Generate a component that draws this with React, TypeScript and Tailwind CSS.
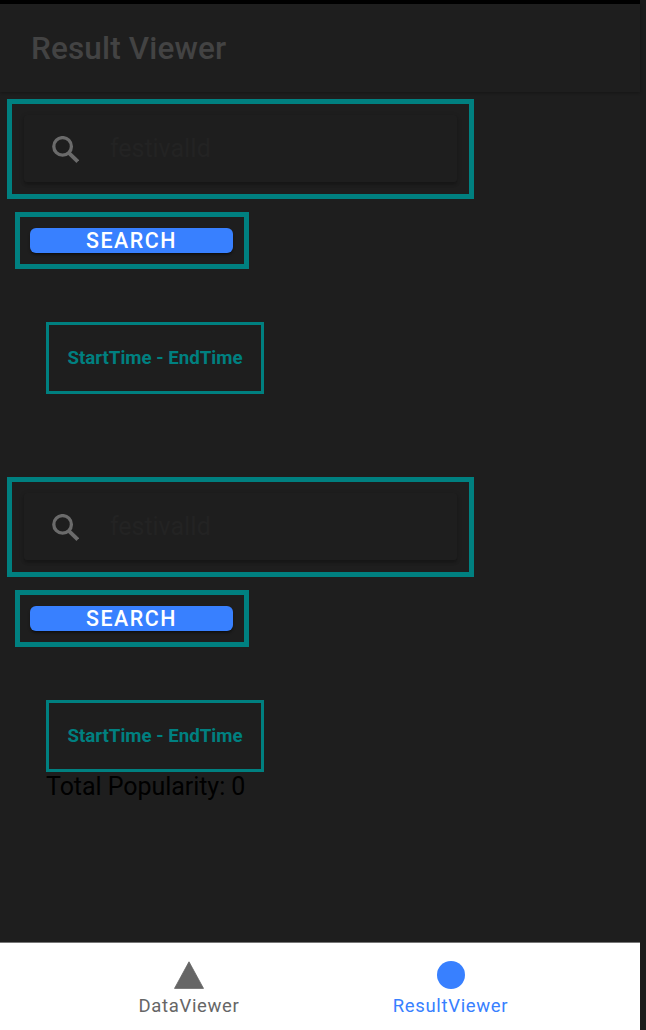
function SearchIcon() {
  return (
    <svg viewBox="0 0 27 27" className="mt-[2px] ml-[28px] h-[27px] w-[27px] shrink-0" fill="none" stroke="#6b6b6b">
      <circle cx="10.6" cy="10.4" r="8.8" strokeWidth="3.3" />
      <path d="M16.8 16.8 25.8 25.6" strokeWidth="3.8" />
    </svg>
  );
}

function SearchPanel() {
  return (
    <>
      <div className="ml-[7px] h-[100px] w-[467px] border-[5px] border-[#008080] px-[12px] pt-[11px]">
        <div className="flex h-[67px] items-center rounded-[3px] bg-[#1e1e1e] shadow-[0_3px_3px_rgba(0,0,0,0.18),0_1px_5px_rgba(0,0,0,0.14)]">
          <SearchIcon />
          <span className="ml-[31px] text-[25px] leading-[30px] tracking-[-0.05px] text-[#232323]">festivalId</span>
        </div>
      </div>
      <div className="mt-[13px] ml-[15px] h-[57px] w-[234px] border-[5px] border-[#008080] px-[10px] pt-[11px]">
        <button className="flex h-[25px] w-[203px] items-center justify-center rounded-[6px] bg-[#3880ff] text-[21.4px] leading-[24px] font-medium tracking-[1.5px] text-white shadow-[0_3px_2px_-2px_rgba(0,0,0,0.4),0_2px_3px_rgba(0,0,0,0.3)]">
          SEARCH
        </button>
      </div>
      <div className="mt-[53px] ml-[46px] flex h-[72px] w-[218px] items-center justify-center border-[3px] border-[#008080] text-[18.7px] leading-[22px] font-bold whitespace-nowrap text-[#008080]">
        StartTime - EndTime
      </div>
    </>
  );
}

export default function App() {
  return (
    <div className="flex h-[1030px] w-[646px] bg-[#1b1b1b] font-['Roboto',sans-serif]">
      <div className="flex w-[640px] flex-col bg-[#1e1e1e]">
        <div className="h-1 shrink-0 bg-black" />
        <header className="flex h-[88px] shrink-0 items-center pt-[2px] pl-[31px] shadow-[0_1px_3px_rgba(0,0,0,0.3)]">
          <h1 className="text-[31.5px] leading-[40px] font-medium tracking-[0.15px] text-[#434343]">Result Viewer</h1>
        </header>
        <main className="flex-1 pt-[7px]">
          <section className="h-[378px]">
            <SearchPanel />
          </section>
          <section>
            <SearchPanel />
            <p className="ml-[46px] text-[25px] leading-[30px] tracking-[-0.05px] text-black">Total Popularity: 0</p>
          </section>
        </main>
        <nav className="flex h-[88px] shrink-0 justify-center border-t border-[#777777] bg-white pr-px text-[18.5px] leading-[22px] tracking-[0.65px]">
          <div className="flex w-[262px] flex-col items-center pt-[18px] text-[#666666]">
            <svg viewBox="0 0 30 28" className="h-[28px] w-[30px]">
              <path d="M15 .8 29.5 27.4H.5Z" fill="#666666" stroke="#666666" strokeWidth=".8" strokeLinejoin="round" />
            </svg>
            <span className="mt-[6px] pl-px">DataViewer</span>
          </div>
          <div className="flex w-[262px] flex-col items-center pt-[18px] text-[#3880ff]">
            <div className="h-[28px] w-[28px] rounded-full bg-[#3880ff]" />
            <span className="mt-[6px]">ResultViewer</span>
          </div>
        </nav>
      </div>
    </div>
  );
}
